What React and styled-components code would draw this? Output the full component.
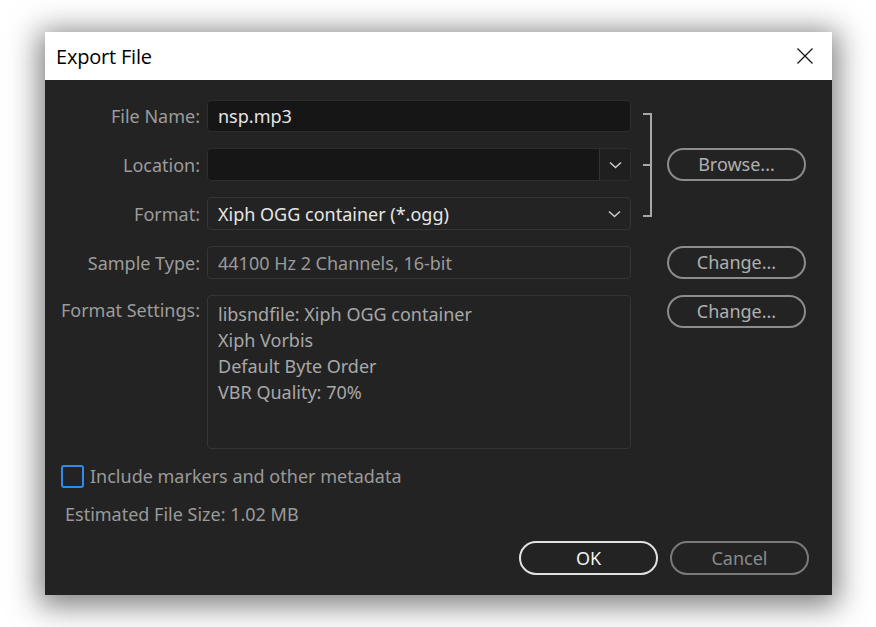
import React from "react";
import styled, { createGlobalStyle } from "styled-components";

const Global = createGlobalStyle`
  html, body { margin: 0; padding: 0; background: #ffffff; }
  * { box-sizing: border-box; }
`;

const Page = styled.div`
  width: 876px;
  height: 627px;
  padding: 32px 0 0 45px;
  background: #ffffff;
  overflow: hidden;
`;

const Window = styled.div`
  width: 787px;
  height: 563px;
  display: flex;
  flex-direction: column;
  box-shadow: 0 5px 28px 6px rgba(0, 0, 0, 0.5);
  font-family: "Noto Sans", "Open Sans", sans-serif;
`;

const TitleBar = styled.div`
  height: 48px;
  background: #ffffff;
  display: flex;
  align-items: center;
  justify-content: space-between;
  padding: 0 19px 0 11px;
`;

const Title = styled.div`
  font-family: "Open Sans", "Noto Sans", sans-serif;
  font-size: 20px;
  color: #000;
  letter-spacing: -0.2px;
`;

const Close = styled.div`
  width: 16px;
  height: 16px;
  display: flex;
`;

const Body = styled.div`
  flex: 1;
  background: #232323;
  padding: 20px 23px 20px 16px;
  display: flex;
  flex-direction: column;
`;

const Grid = styled.div`
  display: grid;
  grid-template-columns: 146px 424px 36px 139px;
  grid-template-rows: 32px 33px 33px 33px 154px;
  row-gap: 16px;
`;

const Label = styled.div`
  grid-column: 1;
  grid-row: ${(p) => p.$row};
  padding-right: 7px;
  font-size: 18px;
  color: #9c9c9c;
  display: flex;
  justify-content: flex-end;
  align-items: ${(p) => (p.$top ? "flex-start" : "center")};
  padding-top: ${(p) => (p.$top ? "3px" : "0")};
  white-space: nowrap;
`;

const Field = styled.div`
  grid-column: 2;
  grid-row: ${(p) => p.$row};
  border: 1px solid ${(p) => (p.$dark ? "#2e2e2e" : "#353535")};
  background: ${(p) => (p.$dark ? "#161616" : "#232323")};
  border-radius: 4px;
  display: flex;
  align-items: ${(p) => (p.$multi ? "flex-start" : "center")};
  overflow: hidden;
`;

const FieldText = styled.div`
  flex: 1;
  padding: 0 10px;
  font-size: 18px;
  color: ${(p) => p.$color || "#e6e6e6"};
  white-space: nowrap;
`;

const MultiText = styled.div`
  padding: 5px 10px;
  font-size: 18px;
  line-height: 26px;
  color: #a8a8a8;
`;

const DropSeg = styled.div`
  width: 31px;
  align-self: stretch;
  display: flex;
  align-items: center;
  justify-content: center;
  background: ${(p) => (p.$split ? "#1f1f1f" : "transparent")};
  border-left: ${(p) => (p.$split ? "1px solid #333" : "none")};
`;

const Bracket = styled.div`
  grid-column: 3;
  grid-row: 1 / 4;
  margin: 13px 0 13px 12px;
  width: 9px;
  border: 2px solid #a8a8a8;
  border-left: none;
  position: relative;
  &::after {
    content: "";
    position: absolute;
    left: 0;
    right: 0;
    top: 50%;
    margin-top: -1px;
    height: 2px;
    background: #a8a8a8;
  }
`;

const Pill = styled.button`
  grid-column: 4;
  grid-row: ${(p) => p.$row || "auto"};
  align-self: ${(p) => (p.$top ? "start" : "stretch")};
  height: ${(p) => (p.$top ? "33px" : "auto")};
  width: 139px;
  border-radius: 17px;
  border: 2px solid ${(p) => p.$border || "#8c8c8c"};
  background: transparent;
  color: ${(p) => p.$color || "#b0b0b0"};
  font-family: "Noto Sans", "Open Sans", sans-serif;
  font-size: 18px;
  display: flex;
  align-items: center;
  justify-content: center;
  padding: 0 0 1px;
  cursor: default;
`;

const CheckRow = styled.div`
  margin-top: 15px;
  display: flex;
  align-items: center;
  gap: 6px;
`;

const Box = styled.div`
  width: 23px;
  height: 23px;
  border: 2px solid #2d8ceb;
  border-radius: 3px;
`;

const Muted = styled.div`
  font-size: 18px;
  color: #9a9a9a;
  padding-left: ${(p) => p.$indent || "0"};
  margin-top: ${(p) => p.$mt || "0"};
`;

const Footer = styled.div`
  margin-top: auto;
  display: flex;
  justify-content: flex-end;
  gap: 12px;
`;

const FootBtn = styled(Pill)`
  height: 34px;
  width: 139px;
`;

const Chevron = () => (
  <svg width="13" height="8" viewBox="0 0 13 8">
    <path d="M1 1.5 L6.5 6.5 L12 1.5" fill="none" stroke="#c8c8c8" strokeWidth="1.6" />
  </svg>
);

export default function App() {
  return (
    <Page>
      <Global />
      <Window>
        <TitleBar>
          <Title>Export File</Title>
          <Close>
            <svg width="16" height="16" viewBox="0 0 16 16">
              <path d="M0.5 0.5 L15.5 15.5 M15.5 0.5 L0.5 15.5" stroke="#111" strokeWidth="1.2" />
            </svg>
          </Close>
        </TitleBar>
        <Body>
          <Grid>
            <Label $row={1}>File Name:</Label>
            <Field $row={1} $dark>
              <FieldText>nsp.mp3</FieldText>
            </Field>

            <Label $row={2}>Location:</Label>
            <Field $row={2} $dark>
              <FieldText />
              <DropSeg $split>
                <Chevron />
              </DropSeg>
            </Field>

            <Label $row={3}>Format:</Label>
            <Field $row={3}>
              <FieldText>Xiph OGG container (*.ogg)</FieldText>
              <DropSeg>
                <Chevron />
              </DropSeg>
            </Field>

            <Bracket />
            <Pill $row={2}>Browse...</Pill>

            <Label $row={4}>Sample Type:</Label>
            <Field $row={4}>
              <FieldText $color="#9a9a9a">44100 Hz 2 Channels, 16-bit</FieldText>
            </Field>
            <Pill $row={4}>Change...</Pill>

            <Label $row={5} $top>Format Settings:</Label>
            <Field $row={5} $multi>
              <MultiText>
                libsndfile: Xiph OGG container
                <br />
                Xiph Vorbis
                <br />
                Default Byte Order
                <br />
                VBR Quality: 70%
              </MultiText>
            </Field>
            <Pill $row={5} $top>Change...</Pill>
          </Grid>

          <CheckRow>
            <Box />
            <Muted>Include markers and other metadata</Muted>
          </CheckRow>
          <Muted $indent="4px" $mt="14px">Estimated File Size: 1.02 MB</Muted>

          <Footer>
            <FootBtn $border="#e2e2e2" $color="#f0f0f0">OK</FootBtn>
            <FootBtn $border="#7a7a7a" $color="#8a8a8a">Cancel</FootBtn>
          </Footer>
        </Body>
      </Window>
    </Page>
  );
}
